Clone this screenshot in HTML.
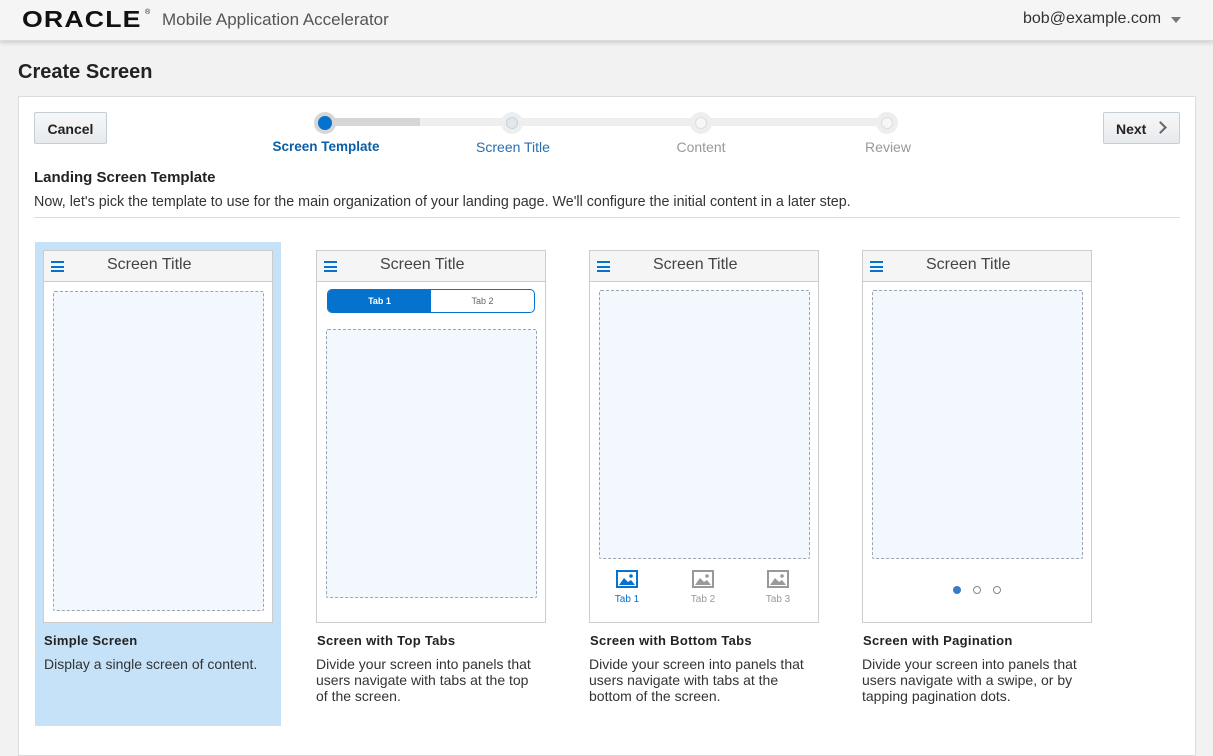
<!DOCTYPE html>
<html><head><style>
*{box-sizing:border-box;margin:0;padding:0}
body{width:1213px;height:746px;overflow:hidden;background:#f2f2f2;font-family:"Liberation Sans",Arial,sans-serif;position:relative;color:#333}
.hdr{position:absolute;left:0;top:0;width:1213px;height:41px;background:#f5f5f5;box-shadow:0 2px 4px rgba(0,0,0,.15);border-bottom:1px solid #ddd}
.abs{position:absolute}
.panel{position:absolute;left:18px;top:96px;width:1178px;height:660px;background:#fff;border:1px solid #dcdcdc}
.btn{position:absolute;height:32px;border:1px solid #c4ced7;border-radius:2px;background:linear-gradient(#f6f7f8,#e7eaed);font-weight:bold;font-size:14px;color:#222;line-height:32px;text-align:center}
.step{position:absolute;top:112px;width:22px;height:22px;border-radius:50%;background:#eee}
.step i{position:absolute;left:5px;top:5px;width:12px;height:12px;border-radius:50%;background:#f7f7f7;border:1px solid #ddd}
.lbl{position:absolute;top:139px;font-size:14px;text-align:center;width:160px}
.phone{position:absolute;top:250px;width:230px;height:373px;background:#fff;border:1px solid #ccc}
.tb{height:31px;border-bottom:1px solid #ccc;background:#f5f5f5;font-size:16px;color:#444;padding-left:63px;line-height:28px;position:relative}
.ham{position:absolute;left:7px;top:10px;width:13px;height:11px;border-top:2px solid #0572ce;border-bottom:2px solid #0572ce}
.ham:after{content:"";position:absolute;left:0;top:2.5px;width:13px;height:2px;background:#0572ce}
.dash{position:absolute;border:1px dashed #9aa5b0;background:#f2f8fd;border-radius:2px}
.ct{position:absolute;top:633px;font-size:13px;font-weight:bold;color:#222;letter-spacing:.3px}
.cd{position:absolute;top:656px;font-size:14px;color:#333;line-height:16px;width:222px}
.ic{position:absolute;top:570px;width:22px;height:18px;border:2px solid #999}
.tl{position:absolute;top:594px;font-size:10px;color:#999;width:40px;text-align:center}
</style></head><body>
<div class="hdr">
 <div class="abs" style="left:22px;top:6px;font-size:23px;font-weight:bold;letter-spacing:1px;color:#111;transform:scaleX(1.16);transform-origin:left">ORACLE</div>
 <div class="abs" style="left:145px;top:9px;font-size:7px;color:#111">®</div>
 <div class="abs" style="left:162px;top:10px;font-size:17px;color:#555">Mobile Application Accelerator</div>
 <div class="abs" style="left:1023px;top:10px;font-size:16px;color:#333">bob@example.com</div>
 <div class="abs" style="left:1171px;top:17px;border-left:5px solid transparent;border-right:5px solid transparent;border-top:6px solid #777"></div>
</div>
<div class="abs" style="left:18px;top:61px;font-size:20px;font-weight:bold;color:#222">Create Screen</div>
<div class="panel"></div>
<div class="btn" style="left:34px;top:112px;width:73px">Cancel</div>
<div class="btn" style="left:1103px;top:112px;width:77px;text-align:left;padding-left:12px">Next <span style="position:absolute;left:52px;top:10px;width:9px;height:9px;border-right:2px solid #666;border-top:2px solid #666;transform:rotate(45deg)"></span></div>
<div class="abs" style="left:325px;top:118px;width:562px;height:8px;background:#eee"></div>
<div class="abs" style="left:325px;top:118px;width:95px;height:8px;background:#d6d6d6"></div>
<div class="step" style="left:314px;background:#d6d6d6"><i style="left:4px;top:4px;width:14px;height:14px;background:#0572ce;border:none"></i></div>
<div class="step" style="left:501px"><i style="background:#e4e8ec;border-color:#c8d0d8"></i></div>
<div class="step" style="left:690px"><i></i></div>
<div class="step" style="left:876px"><i></i></div>
<div class="lbl" style="left:246px;color:#0a5ea8;font-weight:bold;font-size:13.5px">Screen Template</div>
<div class="lbl" style="left:433px;color:#2a6eb0">Screen Title</div>
<div class="lbl" style="left:621px;color:#999">Content</div>
<div class="lbl" style="left:808px;color:#999">Review</div>
<div class="abs" style="left:34px;top:169px;font-size:15px;font-weight:bold;color:#222">Landing Screen Template</div>
<div class="abs" style="left:34px;top:194px;font-size:14.3px;color:#333">Now, let's pick the template to use for the main organization of your landing page. We'll configure the initial content in a later step.</div>
<div class="abs" style="left:34px;top:217px;width:1146px;height:1px;background:#ddd"></div>
<div class="abs" style="left:35px;top:242px;width:246px;height:484px;background:#c6e2f8"></div>

<div class="phone" style="left:43px"><div class="tb"><span class="ham"></span>Screen Title</div></div>
<div class="dash" style="left:53px;top:291px;width:211px;height:320px"></div>
<div class="ct" style="left:44px">Simple Screen</div>
<div class="cd" style="left:44px">Display a single screen of content.</div>

<div class="phone" style="left:316px"><div class="tb"><span class="ham"></span>Screen Title</div></div>
<div class="abs" style="left:327px;top:289px;width:208px;height:24px;border:1px solid #0572ce;border-radius:5px;overflow:hidden;font-size:9px;line-height:22px;text-align:center">
 <div class="abs" style="left:0;top:0;width:103px;height:22px;background:#0572ce;color:#fff;font-weight:bold">Tab 1</div>
 <div class="abs" style="left:103px;top:0;width:103px;height:22px;color:#666">Tab 2</div></div>
<div class="dash" style="left:326px;top:329px;width:211px;height:269px"></div>
<div class="ct" style="left:317px">Screen with Top Tabs</div>
<div class="cd" style="left:316px">Divide your screen into panels that users navigate with tabs at the top of the screen.</div>

<div class="phone" style="left:589px"><div class="tb"><span class="ham"></span>Screen Title</div></div>
<div class="dash" style="left:599px;top:290px;width:211px;height:269px"></div>
<div class="ic" style="left:616px;border-color:#0572ce"><svg width="18" height="14" style="position:absolute;left:0;top:0"><path d="M1 13 L6 6 L10 10 L13 8 L17 13Z" fill="#0572ce"/><circle cx="13" cy="4" r="1.8" fill="#0572ce"/></svg></div>
<div class="ic" style="left:692px"><svg width="18" height="14" style="position:absolute;left:0;top:0"><path d="M1 13 L6 6 L10 10 L13 8 L17 13Z" fill="#999"/><circle cx="13" cy="4" r="1.8" fill="#999"/></svg></div>
<div class="ic" style="left:767px"><svg width="18" height="14" style="position:absolute;left:0;top:0"><path d="M1 13 L6 6 L10 10 L13 8 L17 13Z" fill="#999"/><circle cx="13" cy="4" r="1.8" fill="#999"/></svg></div>
<div class="tl" style="left:607px;color:#0572ce">Tab 1</div>
<div class="tl" style="left:683px">Tab 2</div>
<div class="tl" style="left:758px">Tab 3</div>
<div class="ct" style="left:590px">Screen with Bottom Tabs</div>
<div class="cd" style="left:589px">Divide your screen into panels that users navigate with tabs at the bottom of the screen.</div>

<div class="phone" style="left:862px"><div class="tb"><span class="ham"></span>Screen Title</div></div>
<div class="dash" style="left:872px;top:290px;width:211px;height:269px"></div>
<div class="abs" style="left:953px;top:586px;width:8px;height:8px;border-radius:50%;background:#3a7bc8"></div>
<div class="abs" style="left:973px;top:586px;width:8px;height:8px;border-radius:50%;border:1px solid #888"></div>
<div class="abs" style="left:993px;top:586px;width:8px;height:8px;border-radius:50%;border:1px solid #888"></div>
<div class="ct" style="left:863px">Screen with Pagination</div>
<div class="cd" style="left:862px">Divide your screen into panels that users navigate with a swipe, or by tapping pagination dots.</div>
</body></html>
